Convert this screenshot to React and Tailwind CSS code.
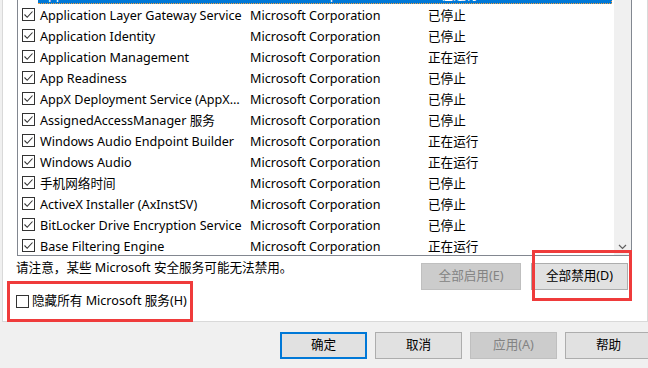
import React from "react";

const rows = [
  ["Application Layer Gateway Service", "已停止"],
  ["Application Identity", "已停止"],
  ["Application Management", "正在运行"],
  ["App Readiness", "已停止"],
  ["AppX Deployment Service (AppXSVC)", "已停止"],
  ["AssignedAccessManager 服务", "已停止"],
  ["Windows Audio Endpoint Builder", "正在运行"],
  ["Windows Audio", "正在运行"],
  ["手机网络时间", "已停止"],
  ["ActiveX Installer (AxInstSV)", "已停止"],
  ["BitLocker Drive Encryption Service", "已停止"],
  ["Base Filtering Engine", "正在运行"],
];

function Check({ checked }) {
  return (
    <span className="w-[13px] h-[13px] border border-[#333333] bg-white flex items-center justify-center shrink-0">
      {checked && (
        <svg width="11" height="11" viewBox="0 0 11 11">
          <path d="M1.5 5.5 L4.2 8.3 L9.5 2.5" fill="none" stroke="#333333" strokeWidth="1.1" />
        </svg>
      )}
    </span>
  );
}

function Row({ name, status, selected, className = "" }) {
  return (
    <div className={"flex h-[21px] items-center pl-[4px] shrink-0 " + className}>
      <Check checked />
      <div
        className={
          "ml-[3px] flex h-[21px] w-[574px] pt-[2px] items-center leading-[19px] " +
          (selected ? "bg-[#0078d7] text-white border-b border-r border-dotted border-[#f0a040]" : "")
        }
      >
        <span className="w-[212px] pl-[2px] pr-[6px] truncate">{name}</span>
        <span className="w-[178px]">Microsoft Corporation</span>
        <span className="flex-1">{status}</span>
      </div>
    </div>
  );
}

function Btn({ children, w = "w-[87px]", variant = "normal" }) {
  const cls =
    variant === "disabled"
      ? "bg-[#cccccc] border border-[#bfbfbf] text-[#838383]"
      : variant === "default"
      ? "bg-[#e1e1e1] border-2 border-[#0078d7] text-black"
      : "bg-[#e1e1e1] border border-[#adadad] text-black";
  return (
    <div className={"h-[27px] flex items-center justify-center shrink-0 " + w + " " + cls}>{children}</div>
  );
}

export default function App() {
  return (
    <div className="relative w-[648px] h-[368px] overflow-hidden bg-[#f0f0f0] text-[12.6px] text-black font-['Noto_Sans','Noto_Sans_CJK_SC',sans-serif]">
      {/* tab panel */}
      <div className="ml-[2px] w-[646px] h-[322px] bg-white border-l border-r border-b border-[#d9d9d9] flex flex-col">
        {/* list */}
        <div className="ml-[14px] w-[615px] h-[256px] border-x border-b border-[#828790] flex overflow-hidden shrink-0">
          <div className="w-[596px] flex flex-col overflow-hidden">
            <Row name="Application Information" status="正在运行" selected className="-mt-[17px]" />
            {rows.map(([n, s], i) => (
              <Row key={i} name={n} status={s} />
            ))}
          </div>
          <div className="w-[17px] bg-[#f0f0f0] flex flex-col justify-end">
            <div className="h-[17px] flex items-center justify-center">
              <svg width="9" height="6" viewBox="0 0 9 6">
                <path d="M1 1 L4.5 4.5 L8 1" fill="none" stroke="#606060" strokeWidth="1.2" />
              </svg>
            </div>
          </div>
        </div>
        {/* note + buttons */}
        <div className="ml-[13px] w-[615px] flex justify-between items-start">
          <span className="mt-[4px] leading-[16px]">请注意，某些 Microsoft 安全服务可能无法禁用。</span>
          <div className="flex gap-[10px] mt-[7px] mr-[3px]">
            <Btn w="w-[100px]" variant="disabled">全部启用(E)</Btn>
            <Btn w="w-[97px]">全部禁用(D)</Btn>
          </div>
        </div>
        <div className="ml-[13px] mt-[3px] h-[16px] flex items-center gap-[3px]">
          <Check />
          <span className="leading-[16px]">隐藏所有 Microsoft 服务(H)</span>
        </div>
      </div>
      {/* dialog buttons */}
      <div className="mt-[10px] pl-[280px] flex gap-[8px]">
        <Btn variant="default">确定</Btn>
        <Btn>取消</Btn>
        <Btn variant="disabled">应用(A)</Btn>
        <Btn>帮助</Btn>
      </div>
      {/* red annotation boxes */}
      <div className="absolute left-[7px] top-[281px] w-[186px] h-[41px] border-[3px] border-[#ef3b3b]" />
      <div className="absolute left-[532px] top-[250px] w-[100px] h-[51px] border-[3px] border-[#ef3b3b]" />
    </div>
  );
}
